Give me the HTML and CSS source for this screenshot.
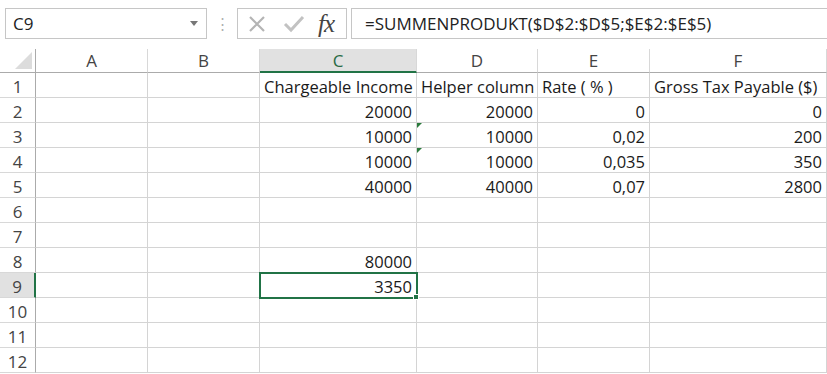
FILE: index.html
```html
<!DOCTYPE html>
<html lang="de">
<head>
    <meta charset="UTF-8">
    <title>Excel - SUMMENPRODUKT</title>
    <link rel="stylesheet" href="styles.css">
</head>
<body>
    <div class="toolbar">
        <div class="name-box">
            <span class="name-value">C9</span>
            <span class="name-arrow"></span>
        </div>
        <div class="grip">&#8942;</div>
        <div class="fx-buttons">
            <svg class="fx-icon" width="20" height="20" viewBox="0 0 20 20">
                <path d="M3 3 L17 17 M17 3 L3 17" stroke="#b4b4b4" stroke-width="2.2" fill="none"/>
            </svg>
            <svg class="fx-icon" width="22" height="20" viewBox="0 0 22 20">
                <path d="M2 10 L8 16 L20 3" stroke="#c2c2c2" stroke-width="3" fill="none"/>
            </svg>
            <span class="fx-label"><i>f</i><i>x</i></span>
        </div>
        <div class="formula">=SUMMENPRODUKT($D$2:$D$5;$E$2:$E$5)</div>
    </div>

    <div class="sheet">
        <div class="corner"><span class="corner-tri"></span></div>
        <div class="col-head">A</div>
        <div class="col-head">B</div>
        <div class="col-head active">C</div>
        <div class="col-head">D</div>
        <div class="col-head">E</div>
        <div class="col-head">F</div>

        <div class="row-head">1</div>
        <div class="cell"></div><div class="cell"></div>
        <div class="cell">Chargeable Income</div>
        <div class="cell">Helper column</div>
        <div class="cell">Rate ( % )</div>
        <div class="cell">Gross Tax Payable ($)</div>

        <div class="row-head">2</div>
        <div class="cell"></div><div class="cell"></div>
        <div class="cell num">20000</div>
        <div class="cell num">20000</div>
        <div class="cell num">0</div>
        <div class="cell num">0</div>

        <div class="row-head">3</div>
        <div class="cell"></div><div class="cell"></div>
        <div class="cell num">10000</div>
        <div class="cell num flag">10000</div>
        <div class="cell num">0,02</div>
        <div class="cell num">200</div>

        <div class="row-head">4</div>
        <div class="cell"></div><div class="cell"></div>
        <div class="cell num">10000</div>
        <div class="cell num flag">10000</div>
        <div class="cell num">0,035</div>
        <div class="cell num">350</div>

        <div class="row-head">5</div>
        <div class="cell"></div><div class="cell"></div>
        <div class="cell num">40000</div>
        <div class="cell num">40000</div>
        <div class="cell num">0,07</div>
        <div class="cell num">2800</div>

        <div class="row-head">6</div>
        <div class="cell"></div><div class="cell"></div><div class="cell"></div>
        <div class="cell"></div><div class="cell"></div><div class="cell"></div>

        <div class="row-head">7</div>
        <div class="cell"></div><div class="cell"></div><div class="cell"></div>
        <div class="cell"></div><div class="cell"></div><div class="cell"></div>

        <div class="row-head">8</div>
        <div class="cell"></div><div class="cell"></div>
        <div class="cell num">80000</div>
        <div class="cell"></div><div class="cell"></div><div class="cell"></div>

        <div class="row-head active">9</div>
        <div class="cell"></div><div class="cell"></div>
        <div class="cell num selected">3350<span class="handle"></span></div>
        <div class="cell"></div><div class="cell"></div><div class="cell"></div>

        <div class="row-head">10</div>
        <div class="cell"></div><div class="cell"></div><div class="cell"></div>
        <div class="cell"></div><div class="cell"></div><div class="cell"></div>

        <div class="row-head">11</div>
        <div class="cell"></div><div class="cell"></div><div class="cell"></div>
        <div class="cell"></div><div class="cell"></div><div class="cell"></div>

        <div class="row-head">12</div>
        <div class="cell"></div><div class="cell"></div><div class="cell"></div>
        <div class="cell"></div><div class="cell"></div><div class="cell"></div>
    </div>
</body>
</html>
```

FILE: styles.css
```css
* {
    margin: 0;
    padding: 0;
    box-sizing: border-box;
}

body {
    background-color: #fff;
    color: #1a1a1a;
    font-family: "Open Sans", "Noto Sans", sans-serif;
    font-size: 16px;
    overflow: hidden;
}

/* formula bar */

.toolbar {
    height: 49px;
    display: flex;
    align-items: flex-start;
    padding: 8px 0 0 5px;
}

.name-box {
    width: 202px;
    height: 31px;
    border: 1px solid #c6c6c6;
    display: flex;
    align-items: center;
    justify-content: space-between;
    padding: 0 8px 0 7px;
}

.name-value {
    font-size: 17px;
    color: #222;
}

.name-arrow {
    width: 0;
    height: 0;
    border-left: 4px solid transparent;
    border-right: 4px solid transparent;
    border-top: 5px solid #777;
}

.grip {
    width: 30px;
    height: 31px;
    text-align: center;
    line-height: 30px;
    color: #b0b0b0;
    font-size: 15px;
}

.fx-buttons {
    width: 110px;
    height: 31px;
    border: 1px solid #c6c6c6;
    display: flex;
    align-items: center;
    padding: 0 0 0 9px;
    gap: 16px;
}

.fx-label {
    font-family: "Liberation Serif", serif;
    font-size: 25px;
    line-height: 28px;
    color: #444;
    margin-left: -3px;
    letter-spacing: -1px;
}

.formula {
    flex: 1;
    height: 31px;
    margin-left: 4px;
    border: 1px solid #c6c6c6;
    border-right: none;
    padding: 2px 0 0 13px;
    font-size: 17px;
    line-height: 26px;
    color: #222;
}

/* sheet grid */

.sheet {
    display: grid;
    grid-template-columns: 36px 112px 112px 157px 121px 112px 177px;
    grid-template-rows: 24px repeat(12, 25px);
}

.corner {
    border-right: 1px solid #ababab;
    border-bottom: 1px solid #ababab;
    position: relative;
}

.corner-tri {
    position: absolute;
    right: 3px;
    bottom: 3px;
    width: 0;
    height: 0;
    border-left: 17px solid transparent;
    border-bottom: 17px solid #dcdcdc;
}

.col-head {
    border-right: 1px solid #d8d8d8;
    border-bottom: 1px solid #ababab;
    text-align: center;
    line-height: 24px;
    font-size: 17px;
    color: #444;
    background-color: #fff;
}

.col-head.active {
    background-color: #e1e1e1;
    border-bottom: 2px solid #217346;
    color: #2a6a45;
}

.row-head {
    border-right: 1px solid #ababab;
    border-bottom: 1px solid #d8d8d8;
    text-align: center;
    font-size: 17px;
    line-height: 28px;
    color: #444;
}

.row-head.active {
    background-color: #e1e1e1;
    border-right: 2px solid #217346;
}

.cell {
    border-right: 1px solid #d4d4d4;
    border-bottom: 1px solid #d4d4d4;
    padding: 0 4px;
    font-size: 16.5px;
    line-height: 28px;
    white-space: nowrap;
    position: relative;
}

.num {
    text-align: right;
}

.flag::before {
    content: "";
    position: absolute;
    left: 0;
    top: 0;
    border-top: 5px solid #2a7a3c;
    border-right: 5px solid transparent;
}

.selected {
    outline: 2px solid #217346;
    outline-offset: -1px;
    z-index: 1;
}

.handle {
    position: absolute;
    right: -3px;
    bottom: -3px;
    width: 6px;
    height: 6px;
    background-color: #217346;
    border: 1px solid #fff;
}
```
